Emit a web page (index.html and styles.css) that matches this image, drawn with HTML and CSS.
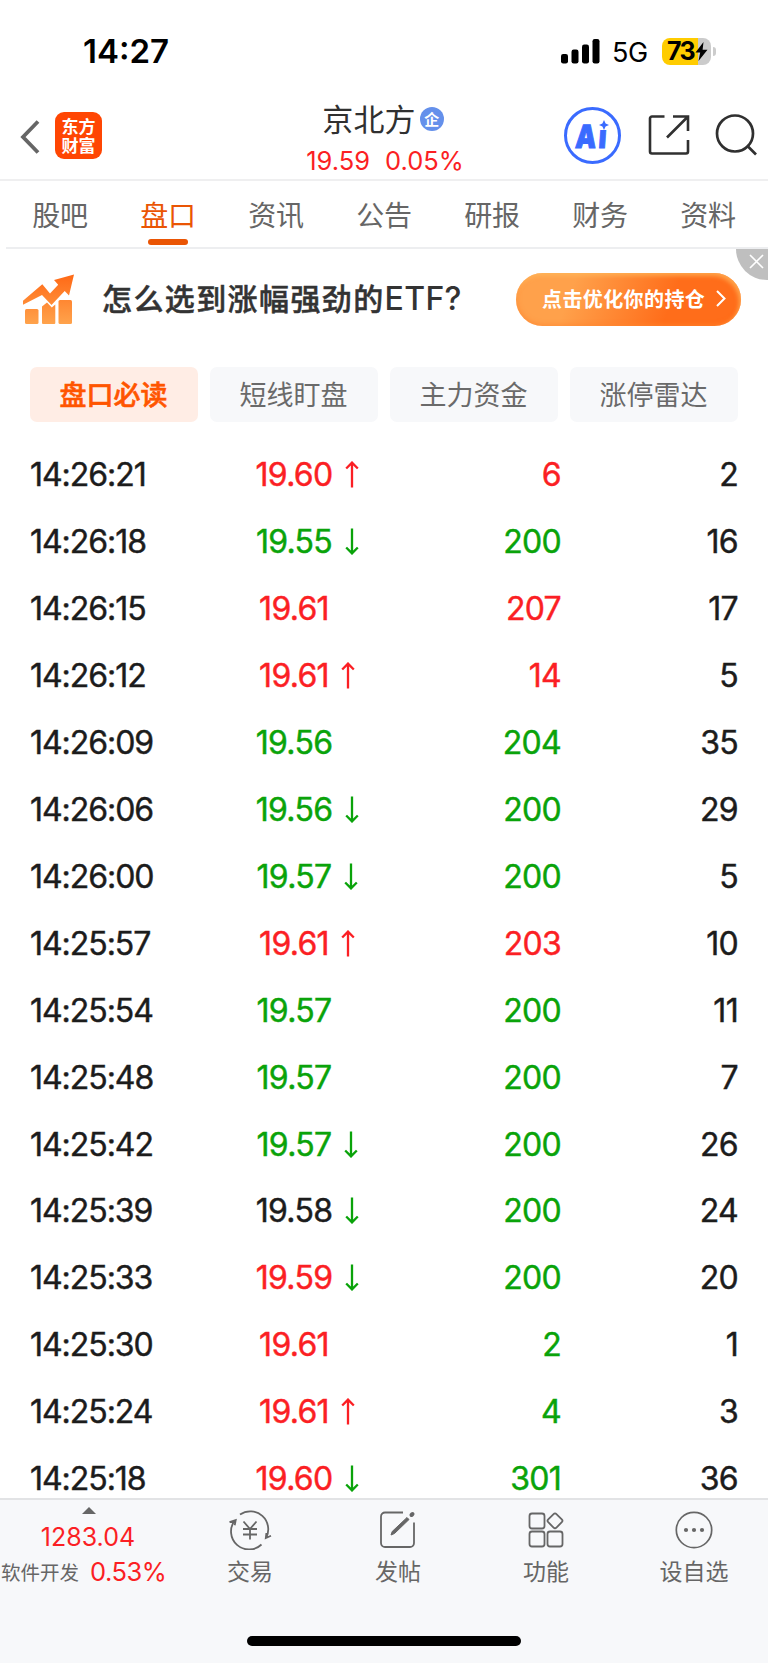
FILE: index.html
```html
<!DOCTYPE html>
<html lang="zh-CN">
<head>
<meta charset="utf-8">
<title>京北方</title>
<link rel="stylesheet" href="styles.css">
</head>
<body>
<svg class="defs" width="0" height="0">
  <symbol id="up" viewBox="0 0 14 27"><path d="M7 26.5V1.5M1.2 7.5 7 1.6l5.800 5.900" fill="none" stroke="currentColor" stroke-width="2.300"/></symbol>
  <symbol id="down" viewBox="0 0 14 27"><path d="M7 .5v25M1.200 19.500 7 25.400l5.800-5.900" fill="none" stroke="currentColor" stroke-width="2.300"/></symbol>
</svg>
<div class="screen">
  <div class="status">
    <span class="clock">14:27</span>
    <svg class="signal" width="40" height="25" viewBox="0 0 40 25"><rect x="0" y="15" width="7" height="9.500" rx="2.200"/><rect x="10.500" y="10.500" width="7" height="14" rx="2.200"/><rect x="21" y="5.500" width="7" height="19" rx="2.200"/><rect x="31.500" y="0" width="7" height="24.500" rx="2.200"/></svg>
    <span class="network">5G</span>
    <span class="battery"><span class="level">73</span><svg width="13" height="19" viewBox="0 0 13 19"><path d="M8.500 0 .5 10.500h4.700L3.500 19 12.500 7.800H7.600z"/></svg></span>
    <span class="battery-tip"></span>
  </div>

  <header class="header">
    <svg class="back" width="20" height="36" viewBox="0 0 20 36"><path d="M18 2.500 3 18l15 15.500" fill="none" stroke="#666" stroke-width="3.800"/></svg>
    <span class="logo"><span>东方</span><span>财富</span></span>
    <div class="stock">
      <div class="stock-name">京北方<span class="badge">企</span></div>
      <div class="stock-quote"><span>19.59</span><span>0.05%</span></div>
    </div>
    <div class="ai"><span class="ai-text">Aı</span><svg class="spark" width="10" height="10" viewBox="0 0 10 10"><path d="M5 0 6.600 3.400 10 5 6.600 6.600 5 10 3.400 6.600 0 5l3.400-1.600z" fill="#3a6bff"/></svg></div>
    <svg class="share" width="42" height="42" viewBox="0 0 42 42" fill="none" stroke="#303030" stroke-width="2.600"><path d="M16.500 2.500H4a2 2 0 0 0-2 2v33a2 2 0 0 0 2 2h34a2 2 0 0 0 2-2V26M25 2.500h15V17M39.500 3 19 23.500"/></svg>
    <svg class="search" width="44" height="44" viewBox="0 0 44 44" fill="none" stroke="#303030" stroke-width="2.700"><circle cx="21" cy="20.500" r="18"/><path d="m33 32.500 9 9"/></svg>
  </header>

  <nav class="tabs">
    <span class="tab">股吧</span><span class="tab active">盘口</span><span class="tab">资讯</span><span class="tab">公告</span><span class="tab">研报</span><span class="tab">财务</span><span class="tab">资料</span>
  </nav>

  <section class="banner">
    <svg class="chart" width="53" height="51" viewBox="0 0 53 51"><defs><linearGradient id="g" x1="0" y1="0" x2="0" y2="50" gradientUnits="userSpaceOnUse"><stop offset="0" stop-color="#ff6815"/><stop offset="1" stop-color="#ffa34c"/></linearGradient></defs><g fill="url(#g)"><path d="M51 .5 31 6l4.200 4.700-8.200 8.800-7.700-9.300L0 26.800v4l19-9.800 9.500 10 13.200-14 4.300 4.500z"/><rect x="2" y="35" width="13.500" height="15" rx="1.500"/><path d="M19 32.500 24 28.500l4.800 5 3.500-3V49q0 1-1 1H20q-1 0-1-1z"/><rect x="35.500" y="26" width="13.500" height="24" rx="1.500"/></g></svg>
    <span class="slogan">怎么选到涨幅强劲的<span class="latin">ETF?</span></span>
    <span class="cta">点击优化你的持仓<svg width="10" height="17" viewBox="0 0 10 17"><path d="m1 1 7.500 7.500L1 16" fill="none" stroke="#fff" stroke-width="2"/></svg></span>
    <span class="close"><svg width="15" height="15" viewBox="0 0 15 15"><path d="m1 1 13 13M14 1 1 14" stroke="#fff" stroke-width="1.700"/></svg></span>
  </section>

  <div class="chips"><span class="chip on">盘口必读</span><span class="chip">短线盯盘</span><span class="chip">主力资金</span><span class="chip">涨停雷达</span></div>

  <main class="ticks">
    <div class="row"><span class="time">14:26:21</span><span class="price red">19.60<svg class="arrow red"><use href="#up"/></svg></span><span class="red">6</span><span>2</span></div>
    <div class="row"><span class="time">14:26:18</span><span class="price green">19.55<svg class="arrow green"><use href="#down"/></svg></span><span class="green">200</span><span>16</span></div>
    <div class="row"><span class="time">14:26:15</span><span class="price red">19.61</span><span class="red">207</span><span>17</span></div>
    <div class="row"><span class="time">14:26:12</span><span class="price red">19.61<svg class="arrow red"><use href="#up"/></svg></span><span class="red">14</span><span>5</span></div>
    <div class="row"><span class="time">14:26:09</span><span class="price green">19.56</span><span class="green">204</span><span>35</span></div>
    <div class="row"><span class="time">14:26:06</span><span class="price green">19.56<svg class="arrow green"><use href="#down"/></svg></span><span class="green">200</span><span>29</span></div>
    <div class="row"><span class="time">14:26:00</span><span class="price green">19.57<svg class="arrow green"><use href="#down"/></svg></span><span class="green">200</span><span>5</span></div>
    <div class="row"><span class="time">14:25:57</span><span class="price red">19.61<svg class="arrow red"><use href="#up"/></svg></span><span class="red">203</span><span>10</span></div>
    <div class="row"><span class="time">14:25:54</span><span class="price green">19.57</span><span class="green">200</span><span>11</span></div>
    <div class="row"><span class="time">14:25:48</span><span class="price green">19.57</span><span class="green">200</span><span>7</span></div>
    <div class="row"><span class="time">14:25:42</span><span class="price green">19.57<svg class="arrow green"><use href="#down"/></svg></span><span class="green">200</span><span>26</span></div>
    <div class="row"><span class="time">14:25:39</span><span class="price">19.58<svg class="arrow green"><use href="#down"/></svg></span><span class="green">200</span><span>24</span></div>
    <div class="row"><span class="time">14:25:33</span><span class="price red">19.59<svg class="arrow green"><use href="#down"/></svg></span><span class="green">200</span><span>20</span></div>
    <div class="row"><span class="time">14:25:30</span><span class="price red">19.61</span><span class="green">2</span><span>1</span></div>
    <div class="row"><span class="time">14:25:24</span><span class="price red">19.61<svg class="arrow red"><use href="#up"/></svg></span><span class="green">4</span><span>3</span></div>
    <div class="row"><span class="time">14:25:18</span><span class="price red">19.60<svg class="arrow green"><use href="#down"/></svg></span><span class="green">301</span><span>36</span></div>
  </main>

  <footer class="bottom">
    <div class="actions">
      <div class="index">
        <svg class="caret" width="14" height="7" viewBox="0 0 14 7"><path d="M7 0 14 7H0z" fill="#666"/></svg>
        <span class="index-value">1283.04</span>
        <span class="index-change"><span class="sector">软件开发</span><span class="pct">0.53%</span></span>
      </div>
      <div class="action"><svg width="44" height="40" viewBox="0 0 44 40" fill="none" stroke="#666" stroke-width="1.800"><path d="M12 4.500A18 18 0 0 1 38 28M33.500 34.500A18 18 0 0 1 6.800 10.500M1.500 12.200l6.200-2-1 5M43 25.700l-5.200 2.300.6-5M15.500 11.500l6.500 7.500 6.500-7.500M15 19h14M15 24.500h14M22 19v10.500"/></svg><span>交易</span></div>
      <div class="action"><svg width="44" height="40" viewBox="0 0 44 40" fill="none" stroke="#666" stroke-width="1.800"><path d="M27 2.500H9a4 4 0 0 0-4 4V33a4 4 0 0 0 4 4h25a4 4 0 0 0 4-4V12.500"/><path d="m15 25 1.200-3.500L31 7.500l2 2-14.500 14z" fill="#666" stroke-width="1"/><path d="m35.500 5 1-1" stroke-width="4" stroke-linecap="round"/></svg><span>发帖</span></div>
      <div class="action"><svg width="44" height="40" viewBox="0 0 44 40" fill="none" stroke="#666" stroke-width="1.800"><rect x="5.500" y="3.500" width="15" height="15" rx="2.500"/><rect x="5.500" y="21.500" width="15" height="15" rx="2.500"/><rect x="23.500" y="21.500" width="15" height="15" rx="2.500"/><rect x="25.200" y="5" width="11.600" height="11.600" rx="2" transform="rotate(45 31 10.800)"/></svg><span>功能</span></div>
      <div class="action"><svg width="44" height="40" viewBox="0 0 44 40" fill="none" stroke="#666" stroke-width="1.700"><circle cx="22" cy="20" r="17.700"/><g fill="#666" stroke="none"><circle cx="14" cy="20" r="2.100"/><circle cx="22" cy="20" r="2.100"/><circle cx="30" cy="20" r="2.100"/></g></svg><span>设自选</span></div>
    </div>
    <div class="home"></div>
  </footer>
</div>
</body>
</html>
```

FILE: styles.css
```css
* { box-sizing: border-box; }
body { margin: 0; background: #fff; color: #1c1c1c; font-family: Inter, "Noto Sans CJK SC", sans-serif; }
svg { display: block; flex: none; }
.defs { position: absolute; }
.screen { width: 768px; height: 1663px; display: flex; flex-direction: column; overflow: hidden; }
.red { color: #fb1f24; }
.green { color: #0aa30a; }

.status { height: 92px; padding: 11px 0 0 83px; display: flex; align-items: center; color: #000; }
.clock { width: 478px; font-size: 33px; font-weight: 600; letter-spacing: 0; }
.network { width: 49px; margin-left: 11px; margin-right: 1px; font-size: 27px; letter-spacing: -.3px; padding-top: 2px; }
.battery { width: 49px; height: 27px; display: flex; align-items: center; padding-left: 5px; border-radius: 8px; background: linear-gradient(90deg, #fc0 36px, #cbcbcb 36px); }
.level { font-size: 25px; font-weight: 700; letter-spacing: -1.700px; line-height: 27px; margin-right: 1px; }
.battery-tip { width: 3px; height: 9px; margin-left: 2px; border-radius: 0 4px 4px 0; background: #ccc; }

.header { height: 89px; display: flex; align-items: center; padding: 2px 0 2px 20px; border-bottom: 2px solid #efeff0; }
.back { margin-top: 3px; }
.logo { width: 47px; height: 47px; margin: 0 0 0 15px; padding-top: 4px; display: flex; flex-direction: column; align-items: center; border-radius: 9px; background: #ff4603; color: #fff; font: 700 17px/19.500px "Noto Sans CJK SC", sans-serif; }
.stock { width: 200px; margin-left: 183px; padding-top: 5px; display: flex; flex-direction: column; align-items: center; }
.stock-name { display: flex; align-items: center; gap: 4px; height: 42px; margin-left: -4px; padding-bottom: 3px; color: #303030; font-size: 31px; letter-spacing: .2px; }
.badge { width: 24px; height: 24px; margin-top: 3px; border-radius: 50%; background: #6490eb; color: #fff; font: 700 15px/23px "Noto Sans CJK SC", sans-serif; text-align: center; }
.stock-quote { display: flex; gap: 15px; height: 38px; line-height: 41px; color: #fb1f24; font-size: 25.500px; }
.ai { position: relative; width: 57px; height: 57px; margin-left: 79px; border: 3px solid #3a6bff; border-radius: 50%; color: #3a6bff; }
.ai-text { display: block; width: 50px; padding-left: 8px; transform: scaleX(.82) skewX(-5deg); transform-origin: 8px 35px; font: 900 32px/53px Inter, sans-serif; letter-spacing: 3px; -webkit-text-stroke: 1px #3a6bff; }
.spark { position: absolute; left: 32px; top: 10px; }
.share { margin-left: 27px; }
.search { margin-left: 24px; }

.tabs { height: 68px; margin-left: 6px; padding-right: 6px; display: flex; border-bottom: 2px solid #edeef0; }
.tab { flex: 1; display: flex; flex-direction: column; align-items: center; color: #666; font-size: 28px; letter-spacing: -.3px; line-height: 70px; }
.tab.active { color: #ea5504; }
.tab.active::after { content: ""; width: 40px; height: 6px; margin: -12px 0 0 0; border-radius: 3px; background: #ea5504; }

.banner { position: relative; height: 118px; padding: 0 27px 17px 23px; display: flex; align-items: center; }
.slogan { margin-left: 26px; padding-bottom: 4px; flex: 1; color: #333; font-size: 30px; font-weight: 500; letter-spacing: 1.400px; white-space: nowrap; -webkit-text-stroke: .5px #333; }
.latin { font-size: 32px; letter-spacing: .3px; -webkit-text-stroke: 0; }
.cta { width: 225px; height: 53px; padding: 0 0 1px 26px; display: flex; align-items: center; gap: 11px; border-radius: 27px; background: linear-gradient(110deg, #ffa14b 25%, #ff6d1a 68%); box-shadow: inset -2px 3px 4px #ffbc60b0, inset 1px -2px 4px #ff842e80; color: #fff; font-size: 20px; font-weight: 700; letter-spacing: .4px; }
.close { position: absolute; right: 0; top: 0; width: 32px; height: 31px; padding: 5px 0 0 13px; border-radius: 0 0 0 31px; background: #bfbfbf; }

.chips { height: 55px; margin: 0 30px; display: grid; grid-template-columns: repeat(4, 1fr); gap: 12px; }
.chip { display: flex; align-items: center; justify-content: center; padding: 0 1px 1px 0; border-radius: 7px; background: #f7f8fa; color: #6a6a6a; font-size: 27px; }
.chip.on { background: #ffede5; color: #ff5500; font-weight: 500; -webkit-text-stroke: .6px #ff5500; }

.ticks { height: 1077px; padding: 19.500px 30px 0; overflow: hidden; }
.row { height: 66.930px; display: grid; grid-template-columns: 175px 178px 178px 177px; align-items: center; font-size: 32px; letter-spacing: -.7px; -webkit-text-stroke: .45px currentColor; }
.row > :nth-child(n+3) { text-align: right; }
.time { letter-spacing: -1.050px; }
.price { display: flex; align-items: center; justify-content: center; }
.arrow { width: 14px; height: 27px; margin: 0 -26.500px 0 12.500px; }

.bottom { height: 165px; border-top: 2px solid #e2e3e5; background: #f7f8fa; display: flex; flex-direction: column; align-items: center; justify-content: space-between; padding-bottom: 17px; }
.actions { width: 768px; display: grid; grid-template-columns: 176px repeat(4, 148px); color: #666; }
.index { display: flex; flex-direction: column; }
.caret { margin: 7px 0 0 82px; }
.index-value { width: 176px; height: 44px; text-align: center; line-height: 46px; color: #fb1f24; font-size: 25px; }
.index-change { display: flex; align-items: center; height: 27px; }
.sector { width: 90px; padding-left: 1px; font-size: 19.500px; }
.pct { color: #fb1f24; font-size: 25.500px; letter-spacing: -.5px; }
.action { display: flex; flex-direction: column; align-items: center; padding-top: 10px; font-size: 23px; line-height: 45px; }
.home { width: 274px; height: 10px; border-radius: 5px; background: #000; }
```
